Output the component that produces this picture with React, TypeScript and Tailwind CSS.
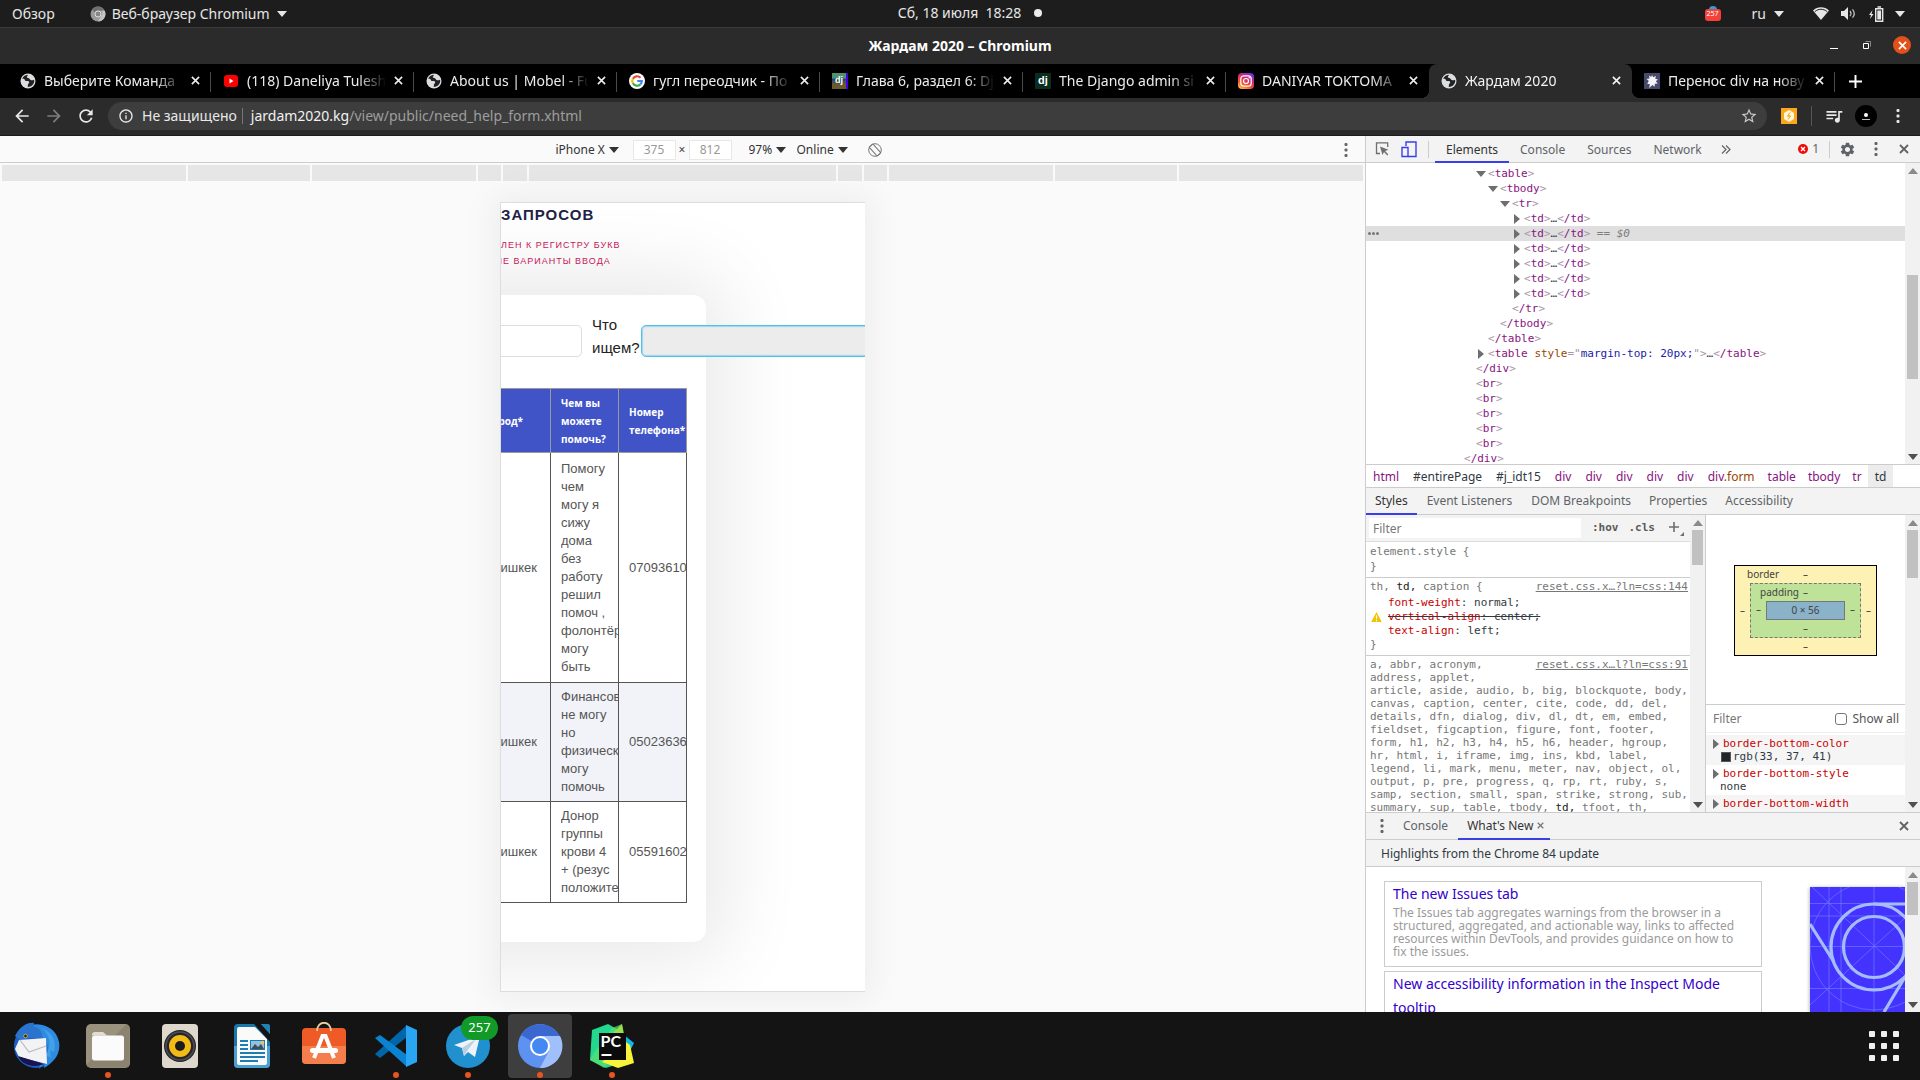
import React from "react";
import type { ReactNode } from "react";
import { MdQueueMusic, MdStarBorder, MdSettings, MdRefresh, MdArrowBack, MdArrowForward, MdInfoOutline } from "react-icons/md";

const MONO = "font-['DejaVu_Sans_Mono',monospace] text-[11px]";

/* ---------- small drawings ---------- */

function Caret({ className = "" }: { className?: string }) {
  return (
    <svg viewBox="0 0 10 6" className={`h-[6px] w-[10px] fill-current ${className}`}>
      <path d="M0 0h10L5 6z" />
    </svg>
  );
}

function Globe() {
  return (
    <svg viewBox="0 0 16 16" className="size-4">
      <circle cx="8" cy="8" r="7.5" fill="#dcdddf" />
      <path d="M7.6 1.8C5 2 3 3.700 2.200 5.900c1.500-.5 2.600.2 2.800 1.300.2.900 1 .9 2.300.9 1.400 0 1.900.6 1.900 1.500s-1 1-1.200 1.900c-.2.800.1 1.700-.4 2.400C11 14 14.200 11.400 14.200 8c0-.5 0-.9-.2-1.300-.9.4-2.200.9-3.400.4-1.100-.5-.6-1.400-1.700-1.800-.9-.3-2-.2-2.100-1.200C6.700 3 8.300 3 7.600 1.800z" fill="#202124" />
    </svg>
  );
}

function YouTube() {
  return (
    <svg viewBox="0 0 16 16" className="size-4">
      <rect x="1" y="2" width="14" height="12" rx="3" fill="#f00" />
      <path d="M6.500 5.500v5L10.500 8z" fill="#fff" />
    </svg>
  );
}

function Google() {
  return (
    <svg viewBox="0 0 16 16" className="size-4">
      <circle cx="8" cy="8" r="8" fill="#fff" />
      <g fill="none" strokeWidth="2.200">
        <path d="M11.500 4.700A4.800 4.800 0 0 0 3.900 5.700" stroke="#ea4335" />
        <path d="M3.900 5.600a4.800 4.800 0 0 0 0 4.800" stroke="#fbbc05" />
        <path d="M3.900 10.300a4.800 4.800 0 0 0 7.400 1.200" stroke="#34a853" />
        <path d="M11.300 11.500A4.800 4.800 0 0 0 12.800 8H8.200" stroke="#4285f4" />
      </g>
    </svg>
  );
}

function Instagram() {
  return (
    <svg viewBox="0 0 16 16" className="size-4">
      <defs>
        <linearGradient id="ig" x1="0.100" y1="1" x2="0.700" y2="0">
          <stop offset="0" stopColor="#ffd23f" />
          <stop offset=".35" stopColor="#f9532d" />
          <stop offset=".65" stopColor="#d62976" />
          <stop offset="1" stopColor="#7b2fd0" />
        </linearGradient>
      </defs>
      <rect width="16" height="16" rx="4" fill="url(#ig)" />
      <rect x="2.800" y="2.800" width="10.400" height="10.400" rx="3" fill="none" stroke="#fff" strokeWidth="1.200" />
      <circle cx="8" cy="8" r="2.500" fill="none" stroke="#fff" strokeWidth="1.200" />
      <circle cx="11.200" cy="4.800" r=".8" fill="#fff" />
    </svg>
  );
}

function DjangoBook() {
  return (
    <span className="flex size-4 items-center justify-center border-r-2 border-[#4400e8] bg-linear-to-b from-[#52916f] from-30% via-[#1e466b] via-40% to-[#6b5a2c] to-75% font-['Liberation_Sans',sans-serif] text-[9px] font-bold text-white">dj</span>
  );
}

function Django() {
  return (
    <span className="flex size-4 items-center justify-center bg-[#092e20] font-['Liberation_Sans',sans-serif] text-[11px] leading-none font-bold text-white">dj</span>
  );
}

function Burst() {
  return (
    <svg viewBox="0 0 16 16" className="size-4">
      <rect width="16" height="16" fill="#474a6b" />
      <path d="M8 2l1.200 2.200L12 3l-.8 2.800 2.800.7-2.200 1.800 2 2.200-3 .2-.1 3L8.500 12l-3.500 3 1-3.800-2.800-.5L4.800 8 2.500 6l3-.6L5 2.600l2.200 1.500z" fill="#f4f4f8" />
    </svg>
  );
}

function Dots({ className = "" }: { className?: string }) {
  return (
    <svg viewBox="0 0 4 14" className={`h-[14px] w-1 fill-current ${className}`}>
      <rect x=".5" y="0" width="3" height="3" rx="1" />
      <rect x=".5" y="5.500" width="3" height="3" rx="1" />
      <rect x=".5" y="11" width="3" height="3" rx="1" />
    </svg>
  );
}

function Cross({ className = "size-[9px]" }: { className?: string }) {
  return (
    <svg viewBox="0 0 10 10" className={`fill-none stroke-current ${className}`}>
      <path d="M1 1l8 8M9 1L1 9" strokeWidth="1.800" />
    </svg>
  );
}

/* ---------- desktop top bar ---------- */

function TopBar() {
  return (
    <header className="grid h-7 shrink-0 grid-cols-3 items-center border-b border-[#3c3c3c] bg-[#1d1d1d] text-[14px] text-[#e6e6e6]">
      <div className="flex items-center pl-3">
        <button>Обзор</button>
        <button className="ml-[35px] flex items-center">
          <svg viewBox="0 0 16 16" className="mr-[6px] size-4">
            <circle cx="8" cy="8" r="7.500" fill="#999" />
            <path d="M8 .5A7.500 7.500 0 0 1 14.500 4.500H8a3.500 3.500 0 0 0-3.200 2L2 3.500A7.500 7.500 0 0 1 8 .5z" fill="#6f6f6f" />
            <path d="M14.700 4.700a7.500 7.500 0 0 1-6.500 10.800l3-5.800a3.500 3.500 0 0 0 0-5z" fill="#c4c4c4" />
            <circle cx="8" cy="8" r="3" fill="#888" stroke="#ddd" />
          </svg>
          Веб-браузер Chromium
          <Caret className="ml-[7px]" />
        </button>
      </div>
      <button className="flex items-center justify-center gap-[13px] pb-[2px] pl-5">
        <span className="whitespace-pre">Сб, 18 июля  18:28</span>
        <span className="size-2 rounded-full bg-[#ececec]" />
      </button>
      <div className="flex items-center justify-end pr-[15px]">
        <span className="relative flex h-[14px] w-4 items-end">
          <span className="absolute -top-[1px] left-1 h-3 w-2 rounded-full bg-[#2ba0da]" />
          <span className="relative flex h-3 w-4 items-center justify-center rounded-[3px] bg-[#f4423a] text-[7px] text-white">257</span>
        </span>
        <button className="ml-[31px] flex items-center gap-2">ru <Caret className="w-[9px]" /></button>
        <button className="ml-[29px] flex items-center" aria-label="Системное меню">
          <svg viewBox="0 0 16 13" className="h-[13px] w-4 fill-current"><path d="M0 3.500C4.500-.8 11.500-.8 16 3.500L8 13z" /><path d="M1.800 4.600C5.500 1.500 10.500 1.500 14.200 4.600" fill="none" stroke="#1d1d1d" /></svg>
          <svg viewBox="0 0 16 13" className="ml-3 h-[13px] w-4"><path d="M0 4h3l4-4v13L3 9H0z" fill="currentColor" /><path d="M9 4q2 2.500 0 5M11.500 2.300q3.500 4.200 0 8.400" fill="none" stroke="#bbb" strokeWidth="1.300" /></svg>
          <svg viewBox="0 0 15 16" className="ml-3 h-4 w-[15px]"><path d="M3.500 4L0 9h2l-1 4 3.500-5h-2z" fill="currentColor" /><path d="M6.700 2.700h7v12.600h-7zM8.500 1h3.500" fill="none" stroke="currentColor" strokeWidth="1.400" /><rect x="8.300" y="4.500" width="3.800" height="9" fill="currentColor" /></svg>
          <Caret className="ml-[11px]" />
        </button>
      </div>
    </header>
  );
}

/* ---------- browser window ---------- */

function TitleBar() {
  return (
    <div className="grid h-9 shrink-0 grid-cols-[1fr_auto_1fr] items-center bg-[#2b2b2b] pb-[2px]">
      <span />
      <h1 className="text-[14px] font-bold text-white">Жардам 2020 – Chromium</h1>
      <div className="flex items-center justify-end pr-[9px]">
        <button aria-label="Свернуть" className="mt-[6px] h-px w-2 bg-white" />
        <button aria-label="Развернуть" className="ml-[25px]">
          <svg viewBox="0 0 8 8" className="size-2 fill-none stroke-white"><path d="M.5 2.500h5v5h-5z" /><path d="M2.500.5h5v5" stroke="#888" /></svg>
        </button>
        <button aria-label="Закрыть" className="ml-[22px] flex size-[18px] items-center justify-center rounded-full bg-[#e2511c] text-white">
          <Cross />
        </button>
      </div>
    </div>
  );
}

const TABS: { title: string; icon: ReactNode; active?: boolean }[] = [
  { title: "Выберите Команда", icon: <Globe /> },
  { title: "(118) Daneliya Tulesh", icon: <YouTube /> },
  { title: "About us | Mobel - Fu", icon: <Globe /> },
  { title: "гугл переодчик - По", icon: <Google /> },
  { title: "Глава 6, раздел 6: Dj", icon: <DjangoBook /> },
  { title: "The Django admin si", icon: <Django /> },
  { title: "DANIYAR TOKTOMA", icon: <Instagram /> },
  { title: "Жардам 2020", icon: <Globe />, active: true },
  { title: "Перенос div на нову", icon: <Burst /> },
];

function TabStrip() {
  return (
    <div className="flex h-[34px] shrink-0 bg-black pl-2 text-[14px] text-[#ececec]">
      {TABS.map((t, i) => (
        <div
          key={t.title}
          className={
            t.active
              ? "relative flex w-[203px] items-center rounded-t-lg bg-[#2b2b2b] pr-[11px] pb-px pl-3 text-[#f4f4f4]"
              : "relative flex w-[203px] items-center pr-[11px] pb-px pl-3"
          }
        >
          <span className="shrink-0">{t.icon}</span>
          <button className="ml-2 min-w-0 flex-1 overflow-hidden pb-px text-left whitespace-nowrap [mask-image:linear-gradient(to_right,#000_80%,transparent)]">{t.title}</button>
          <button aria-label="Закрыть вкладку" className="ml-2"><Cross /></button>
          {t.active ? (
            <>
              <span className="absolute bottom-0 -left-2 size-2 bg-[radial-gradient(circle_at_0_0,#000_8px,#2b2b2b_8px)]" />
              <span className="absolute -right-2 bottom-0 size-2 bg-[radial-gradient(circle_at_100%_0,#000_8px,#2b2b2b_8px)]" />
            </>
          ) : (
            i !== 6 && <span className="absolute top-2 right-0 h-5 w-px bg-[#4a4a4a]" />
          )}
        </div>
      ))}
      <button aria-label="Новая вкладка" className="ml-[14px] self-center">
        <svg viewBox="0 0 12 12" className="size-[13px] stroke-white"><path d="M6 0v12M0 6h12" strokeWidth="1.800" /></svg>
      </button>
    </div>
  );
}

function Toolbar() {
  return (
    <div className="flex h-[38px] shrink-0 items-center border-b border-[#1c1c1c] bg-[#2b2b2b] pb-px text-[14px] text-[#e8e8e8]">
      <button aria-label="Назад" className="ml-3"><MdArrowBack className="size-5" /></button>
      <button aria-label="Вперёд" className="ml-3 text-[#7d7d7d]"><MdArrowForward className="size-5" /></button>
      <button aria-label="Обновить" className="ml-3"><MdRefresh className="size-5" /></button>
      <div className="ml-3 flex h-7 flex-1 items-center rounded-full bg-[#3d3d3d] pr-[9px] pl-[10px]">
        <MdInfoOutline className="size-4" />
        <span className="ml-2 pb-px">Не защищено</span>
        <span className="ml-[5px] h-4 w-px bg-[#777]" />
        <button className="ml-2 flex-1 pb-px text-left text-[#9e9e9e]"><span className="text-[#f2f2f2]">jardam2020.kg</span>/view/public/need_help_form.xhtml</button>
        <button aria-label="В закладки"><MdStarBorder className="size-[18px] text-[#c8c8c8]" /></button>
      </div>
      <button aria-label="Расширение" className="ml-[14px]">
        <svg viewBox="0 0 16 16" className="size-4"><rect width="16" height="16" fill="#fba71b" /><path d="M8 2l5 3v6l-5 3-5-3V5z" fill="#fff5d8" /><path d="M9 4.500L6.500 8h3L7 11.500M9 7l-2.500 2" stroke="#f5a623" fill="none" /></svg>
      </button>
      <span className="ml-[14px] h-5 w-px bg-[#555]" />
      <button aria-label="Медиа" className="ml-3"><MdQueueMusic className="size-5" /></button>
      <button aria-label="Профиль" className="ml-[11px] flex size-[22px] flex-col items-center justify-center gap-[2px] rounded-full bg-black">
        <span className="size-1 rounded-full bg-white" /><span className="h-px w-2 bg-[#bbb]" />
      </button>
      <button aria-label="Меню" className="mr-5 ml-[19px]"><Dots /></button>
    </div>
  );
}

/* ---------- device preview ---------- */

const RULER: string[] = ["grow-[184]", "grow-[122]", "grow-[164]", "grow-[23]", "grow-[24]", "grow-[307]", "grow-[24]", "grow-[23]", "grow-[164]", "grow-[122]", "grow-[184]"];

function Pick({ label, value, className = "" }: { label: string; value: string; className?: string }) {
  return (
    <label className={`flex items-center gap-[3px] ${className}`}>
      <select aria-label={label} className="appearance-none bg-transparent text-[#333]"><option>{value}</option></select>
      <Caret className="w-[7px] text-[#333]" />
    </label>
  );
}

const ROWS = [
  { city: "Бишкек", h: "h-[230px]", help: ["Помогу", "чем", "могу я", "сижу", "дома", "без", "работу", "решил", "помоч ,", "фолонтёр", "могу", "быть"], phone: "070936104" },
  { city: "Бишкек", h: "h-[119px] bg-[#f2f3f9]", help: ["Финансов", "не могу", "но", "физически", "могу", "помочь"], phone: "050236368" },
  { city: "Бишкек", h: "h-[101px]", help: ["Донор", "группы", "крови 4", "+ (резус", "положител"], phone: "055916020" },
];

function PhonePage() {
  return (
    <div className="mx-auto mt-[21px] h-[790px] w-[365px] overflow-hidden border-t border-b border-l border-[#ddd] bg-white font-['Liberation_Sans',sans-serif] shadow-[0_0_30px_8px_rgba(0,0,0,0.050)]">
      <h2 className="mt-[2px] text-[15px] leading-5 font-bold tracking-[1px] text-[#212145]">ЗАПРОСОВ</h2>
      <p className="mt-3 text-[9px] leading-4 tracking-[1px] whitespace-nowrap text-[#c8175a]">
        ЛЕН К РЕГИСТРУ БУКВ<br />
        <span className="-ml-[7px]">ЫЕ ВАРИАНТЫ ВВОДА</span>
      </p>
      <div className="-ml-[120px] mt-[26px] h-[647px] w-[325px] rounded-[13px] bg-white pt-[18px] pl-[120px] shadow-[0_0_80px_20px_rgba(0,0,0,0.090)]">
        <div className="flex h-[46px] w-[460px] items-end text-[15px] leading-[23px] text-[#222]">
          <input aria-label="Город" className="mb-[2px] -ml-[30px] h-8 w-[111px] rounded-[5px] border border-[#ddd] bg-white px-2" />
          <label htmlFor="search" className="ml-[10px] w-[49px]">Что ищем?</label>
          <input id="search" className="mb-[2px] h-8 min-w-0 flex-1 rounded-[5px] border border-[#4fc0f0] bg-[#ececec] px-2 shadow-[inset_0_0_1px_1px_#9fd6ee]" />
        </div>
        <table className="-ml-[19px] mt-[29px] w-[205px] table-fixed border-collapse">
          <thead>
            <tr className="h-[64px] bg-[#4054c8] text-left font-['Open_Sans',sans-serif] text-[10px] leading-[18px] text-white">
              <th className="border border-[#999]"><span className="flex justify-end pr-[27px]">Город*</span></th>
              <th className="border border-[#999] pl-[10px]">Чем вы можете помочь?</th>
              <th className="border border-[#999] pl-[10px]">Номер телефона*</th>
            </tr>
          </thead>
          <tbody>
            {ROWS.map((r) => (
              <tr key={r.phone} className={r.h}>
                <td className="border border-[#555]"><div className="flex justify-end pr-[13px] text-[13px] text-[#555]">{r.city}</div></td>
                <td className="border border-[#555] pl-[10px]">
                  <div className="overflow-hidden text-[13px] leading-[18px] whitespace-nowrap text-[#555]">
                    {r.help.map((l) => <div key={l}>{l}</div>)}
                  </div>
                </td>
                <td className="border border-[#555] pl-[10px]"><div className="overflow-hidden text-[13px] text-[#555]">{r.phone}</div></td>
              </tr>
            ))}
          </tbody>
        </table>
      </div>
    </div>
  );
}

function DevicePane() {
  return (
    <section className="flex min-w-0 flex-1 flex-col overflow-hidden bg-[#fafafa]">
      <div className="flex h-[27px] shrink-0 items-center border-b border-[#ccc] pt-px text-[12px]">
        <div className="flex flex-1 items-center justify-center pl-[93px]">
          <Pick label="Устройство" value="iPhone X" />
          <input aria-label="Ширина" defaultValue="375" className="ml-[14px] h-5 w-[43px] border border-[#e8e8e8] bg-white text-center text-[#999]" />
          <span className="w-[13px] text-center text-[#444]">×</span>
          <input aria-label="Высота" defaultValue="812" className="h-5 w-[43px] border border-[#e8e8e8] bg-white text-center text-[#999]" />
          <Pick label="Масштаб" value="97%" className="ml-[17px]" />
          <Pick label="Сеть" value="Online" className="ml-[11px]" />
          <button aria-label="Повернуть" className="ml-5 text-[#777]">
            <svg viewBox="0 0 14 14" className="size-[14px] fill-none stroke-current"><rect x="4.500" y="1" width="5" height="12" rx="1" transform="rotate(-42 7 7)" /><circle cx="7" cy="7" r="6.300" /></svg>
          </button>
        </div>
        <button aria-label="Параметры" className="mr-[17px] text-[#666]"><Dots className="h-[13px]" /></button>
      </div>
      <div className="flex h-[18px] shrink-0 gap-[2px] px-[2px] pt-[2px]">
        {RULER.map((g, i) => <span key={i} className={`basis-0 bg-[#e6e6e6] ${g}`} />)}
      </div>
      <PhonePage />
    </section>
  );
}

/* ---------- developer tools ---------- */

function Scrollbar({ thumb, className = "" }: { thumb: string; className?: string }) {
  return (
    <div className={`flex w-[15px] shrink-0 flex-col bg-[#f1f1f1] ${className}`}>
      <span className="flex h-[15px] items-center justify-center"><Caret className="h-1 w-[7px] rotate-180 text-[#8a8a8a]" /></span>
      <span className={`mx-[2px] bg-[#c1c1c1] ${thumb}`} />
      <span className="mt-auto flex h-[15px] items-center justify-center"><Caret className="h-1 w-[7px] text-[#505050]" /></span>
    </div>
  );
}

const P = ({ children }: { children: ReactNode }) => <span className="text-[#a894a6]">{children}</span>;

function Open({ name }: { name: string }) {
  return <><P>&lt;</P>{name}<P>&gt;</P></>;
}
function Close({ name }: { name: string }) {
  return <><P>&lt;</P>/{name}<P>&gt;</P></>;
}

type Node = { pad: string; arrow?: "down" | "right"; body: ReactNode; selected?: boolean };
const td = (selected = false): Node => ({
  pad: "pl-[146px]",
  arrow: "right",
  selected,
  body: (
    <>
      <Open name="td" /><span className="text-[#303942]">…</span><Close name="td" />
      {selected && <i className="text-[#7d7d7d]"> == $0</i>}
    </>
  ),
});
const br: Node = { pad: "pl-[110px]", body: <Open name="br" /> };

const TREE: Node[] = [
  { pad: "pl-[110px]", arrow: "down", body: <Open name="table" /> },
  { pad: "pl-[122px]", arrow: "down", body: <Open name="tbody" /> },
  { pad: "pl-[134px]", arrow: "down", body: <Open name="tr" /> },
  td(), td(true), td(), td(), td(), td(),
  { pad: "pl-[146px]", body: <Close name="tr" /> },
  { pad: "pl-[134px]", body: <Close name="tbody" /> },
  { pad: "pl-[122px]", body: <Close name="table" /> },
  {
    pad: "pl-[110px]",
    arrow: "right",
    body: (
      <>
        <P>&lt;</P>table <span className="text-[#994500]">style</span><P>="</P><span className="text-[#1a1aa6]">margin-top: 20px;</span><P>"&gt;</P>
        <span className="text-[#303942]">…</span><Close name="table" />
      </>
    ),
  },
  { pad: "pl-[110px]", body: <Close name="div" /> },
  br, br, br, br, br,
  { pad: "pl-[98px]", body: <Close name="div" /> },
];

function ElementsTree() {
  return (
    <div className="flex flex-[301_1_0px] overflow-hidden bg-white">
      <div className={`flex-1 pt-[3px] leading-[15px] whitespace-pre text-[#881280] ${MONO}`}>
        {TREE.map((n, i) => (
          <div key={i} className={`relative flex h-[15px] items-center ${n.pad} ${n.selected ? "bg-[#dfdfdf]" : ""}`}>
            {n.selected && <span className="absolute left-[2px] flex gap-[1px]">{[0, 1, 2].map((k) => <i key={k} className="size-[3px] rounded-full bg-[#777]" />)}</span>}
            {n.arrow && <Caret className={n.arrow === "right" ? "mr-[2px] w-[7px] -rotate-90 text-[#6e6e6e]" : "mr-[2px] w-[7px] text-[#6e6e6e]"} />}
            <span>{n.body}</span>
          </div>
        ))}
      </div>
      <Scrollbar thumb="mt-[97px] h-[104px]" />
    </div>
  );
}

const CRUMBS: [string, string?][] = [["html"], ["", "#entirePage"], ["", "#j_idt15"], ["div"], ["div"], ["div"], ["div"], ["div"], ["div", ".form"], ["table"], ["tbody"], ["tr"], ["td"]];

function StylesPane() {
  return (
    <div className="flex min-w-0 flex-1">
      <div className={`min-w-0 flex-1 overflow-hidden bg-white text-[#777] ${MONO}`}>
        <div className="flex h-[27px] items-center border-b border-[#ddd] bg-[#f3f3f3] pl-[3px]">
          <input aria-label="Filter styles" placeholder="Filter" className="h-5 min-w-0 flex-1 bg-white px-1 font-['Noto_Sans',sans-serif] text-[12px] placeholder:text-[#777]" />
          <button className="ml-[11px] font-bold text-[#5a5a5a]">:hov</button>
          <button className="ml-[10px] font-bold text-[#5a5a5a]">.cls</button>
          <button aria-label="New style rule" className="mr-[5px] ml-[13px] flex items-end text-[#6e6e6e]">
            <svg viewBox="0 0 17 15" className="h-[15px] w-[17px]"><path d="M6 1v10M1 6h10" stroke="currentColor" strokeWidth="1.600" /><path d="M16 11v4h-4z" fill="currentColor" /></svg>
          </button>
        </div>
        <div className="h-9 border-b border-[#ccc] pt-[2px] pl-1 leading-[15px]">
          <div>element.style {"{"}</div>
          <div>{"}"}</div>
        </div>
        <div className="h-[78px] border-b border-[#ccc] pt-[2px] pr-[2px] pl-1 leading-[14px]">
          <div className="mb-[2px] flex justify-between">
            <span>th, <span className="text-[#222]">td,</span> caption {"{"}</span>
            <a href="#reset-144" className="underline">reset.css.x…?ln=css:144</a>
          </div>
          <div className="pl-[18px] text-[#303942]"><span className="text-[#c80000]">font-weight</span>: normal;</div>
          <div className="flex items-center text-[#303942]">
            <svg viewBox="0 0 12 12" className="mr-[6px] ml-[1px] h-3 w-[11px]"><path d="M6 .5L11.800 11.500H.2z" fill="#f2c200" /><path d="M6 4v4M6 9v1.500" stroke="#fff" strokeWidth="1.300" /></svg>
            <span className="line-through"><span className="text-[#c80000]">vertical-align</span>: center;</span>
          </div>
          <div className="pl-[18px] text-[#303942]"><span className="text-[#c80000]">text-align</span>: left;</div>
          <div>{"}"}</div>
        </div>
        <div className="pt-[2px] pr-[2px] pl-1 leading-[13px]">
          <a href="#reset-91" className="float-right underline">reset.css.x…l?ln=css:91</a>
          a, abbr, acronym,<br />address, applet,<br />
          article, aside, audio, b, big, blockquote, body,<br />
          canvas, caption, center, cite, code, dd, del,<br />
          details, dfn, dialog, div, dl, dt, em, embed,<br />
          fieldset, figcaption, figure, font, footer,<br />
          form, h1, h2, h3, h4, h5, h6, header, hgroup,<br />
          hr, html, i, iframe, img, ins, kbd, label,<br />
          legend, li, mark, menu, meter, nav, object, ol,<br />
          output, p, pre, progress, q, rp, rt, ruby, s,<br />
          samp, section, small, span, strike, strong, sub,<br />
          summary, sup, table, tbody, <span className="text-[#222]">td,</span> tfoot, th,<br />
        </div>
      </div>
      <Scrollbar thumb="h-[35px]" />
    </div>
  );
}

function BoxModel() {
  return (
    <div className="mx-auto mt-[49px] w-[143px] border border-black bg-[#fdf1b4] text-[10px] leading-[17px] text-[#444]">
      <div className="grid grid-cols-[1fr_5px_1fr] pl-3"><span>border</span><span className="-ml-[6px]">–</span><span /></div>
      <div className="grid grid-cols-[15px_1fr_15px] items-center text-center">
        <span>–</span>
        <div className="border border-dashed border-[#777] bg-[#bee297]">
          <div className="grid grid-cols-[1fr_5px_1fr]"><span className="pr-1 text-right">padding</span><span>–</span><span /></div>
          <div className="grid grid-cols-[15px_1fr_15px]">
            <span>–</span>
            <div className="border border-[#777] bg-[#8ab2c9]">0 × 56</div>
            <span>–</span>
          </div>
          <div>–</div>
        </div>
        <span>–</span>
      </div>
      <div className="text-center">–</div>
    </div>
  );
}

function PropName({ children }: { children: string }) {
  return <div className="flex items-center"><Caret className="mr-[2px] w-[7px] -rotate-90 text-[#6e6e6e]" /><span className="text-[#c80000]">{children}</span></div>;
}

function ComputedPane() {
  return (
    <div className="flex w-[215px] shrink-0 overflow-hidden border-l border-[#ccc] bg-white">
      <div className="min-w-0 flex-1">
        <div className="h-[190px] border-b border-[#ccc] pt-px"><BoxModel /></div>
        <div className="flex h-[28px] items-center border-b border-[#eee] pr-[6px] pl-[7px] text-[12px] text-[#555]">
          <input aria-label="Filter computed" placeholder="Filter" className="w-20 min-w-0 flex-1 placeholder:text-[#777]" />
          <label className="flex items-center gap-[5px]"><input type="checkbox" className="size-3 appearance-none rounded-[3px] border border-[#777] bg-white" />Show all</label>
        </div>
        <div className={`pt-[2px] leading-[13px] text-[#303942] ${MONO}`}>
          <div className="h-[30px] bg-[#f5f5f5] pt-[2px] pl-[5px]"><PropName>border-bottom-color</PropName><div className="flex items-center gap-[2px] pl-[10px]"><span className="size-[10px] border border-[#555] bg-[#212529]" />rgb(33, 37, 41)</div></div>
          <div className="h-[30px] pt-[2px] pl-[5px]"><PropName>border-bottom-style</PropName><div className="pl-[9px]">none</div></div>
          <div className="h-[30px] bg-[#f5f5f5] pt-[2px] pl-[5px]"><PropName>border-bottom-width</PropName></div>
        </div>
      </div>
      <Scrollbar thumb="h-[48px]" />
    </div>
  );
}

function Blueprint() {
  return (
    <svg viewBox="0 0 95 125" preserveAspectRatio="xMinYMin slice" className="mt-5 w-[95px] shrink-0 self-stretch bg-[#4433ff] shadow-[0_1px_4px_rgba(0,0,0,0.400)]">
      <g stroke="#6f7dff" strokeOpacity=".65" fill="none">
        <path d="M64 0v125M19 0v125M31 0v125M0 59.500h95M0 16.500h95M0 29h95M0 101.500h95M0-2l95 90M0 118L95 31" />
        <circle cx="64" cy="59" r="64" />
      </g>
      <g stroke="#a5bdff" strokeWidth="3.200" fill="none">
        <circle cx="64" cy="60" r="43" />
        <circle cx="64" cy="60" r="30.500" />
        <path d="M64 17h31M0 37l24 38M95 90l-21 35" />
      </g>
    </svg>
  );
}

function DevTools() {
  return (
    <aside className="flex w-[555px] shrink-0 flex-col overflow-hidden border-l border-[#ccc] bg-white text-[12px] text-[#5f6368]">
      <div className="flex h-[27px] shrink-0 items-center border-b border-[#ccc] bg-[#f3f3f3]">
        <button aria-label="Inspect" className="ml-[9px]">
          <svg viewBox="0 0 14 14" className="size-[14px]"><path d="M5 11.500H1.500V.8h11.200V5" fill="none" stroke="#6e6e6e" strokeWidth="1.300" /><path d="M5 4.500l8.500 3.300-3.400 1.300 3.200 3.300-1 1-3.300-3.300L7.500 13z" fill="#6e6e6e" /></svg>
        </button>
        <button aria-label="Device toolbar" className="ml-[12px]">
          <svg viewBox="0 0 16 17" className="h-[17px] w-4 fill-none stroke-[#3a3ee8]" strokeWidth="1.400"><path d="M5 5V1h10v14.500H7" /><path d="M1 6.500h6v9H1z" /></svg>
        </button>
        <span className="ml-[11px] h-[17px] w-px bg-[#ccc]" />
        <nav className="ml-[6px] flex h-full">
          <button className="h-[27px] border-b-2 border-[#3b3fe8] px-[11px] pt-[2px] text-[#333]">Elements</button>
          <button className="px-[11px] pt-px">Console</button>
          <button className="px-[11px] pt-px">Sources</button>
          <button className="px-[11px] pt-px">Network</button>
        </nav>
        <button aria-label="More tabs" className="ml-2"><svg viewBox="0 0 10 9" className="h-[9px] w-[10px] fill-none stroke-current"><path d="M1 .5l4 4-4 4M5 .5l4 4-4 4" strokeWidth="1.200" /></svg></button>
        <button className="ml-auto flex items-center gap-1"><svg viewBox="0 0 10 10" className="size-[10px]"><circle cx="5" cy="5" r="5" fill="#eb0c0c" /><path d="M3 3l4 4M7 3L3 7" stroke="#fff" strokeWidth="1.300" /></svg>1</button>
        <span className="ml-[10px] h-[17px] w-px bg-[#ccc]" />
        <button aria-label="Settings" className="ml-[9px]"><MdSettings className="size-[17px]" /></button>
        <button aria-label="Menu" className="ml-[18px]"><Dots className="h-[13px]" /></button>
        <button aria-label="Close" className="mr-[11px] ml-[21px]"><Cross className="size-[10px]" /></button>
      </div>
      <ElementsTree />
      <div className="flex h-[23px] shrink-0 items-center border-t border-[#ccc] bg-white text-[#881280]">
        {CRUMBS.map(([n, s], i) => (
          <button key={i} className={i === 12 ? "h-full bg-[#ececec] px-[7px] pt-px text-[#303942]" : i > 8 ? "px-[6px] pt-px" : "px-[7px] pt-px"}>{n}{s && <span className={n ? "text-[#994500]" : "text-[#303942]"}>{s}</span>}</button>
        ))}
      </div>
      <nav className="flex h-7 shrink-0 border-y border-[#ccc] bg-[#f3f3f3]">
        <button className="h-[27px] border-b-2 border-[#3b3fe8] px-[9px] pt-px text-[#333]">Styles</button>
        <button className="px-[10px]">Event Listeners</button>
        <button className="px-[9px]">DOM Breakpoints</button>
        <button className="px-[9px]">Properties</button>
        <button className="px-[9px]">Accessibility</button>
      </nav>
      <div className="flex flex-[297_1_0px] overflow-hidden">
        <StylesPane />
        <ComputedPane />
      </div>
      <div className="flex h-7 shrink-0 items-center border-y border-[#ccc] bg-[#f3f3f3]">
        <button aria-label="Drawer menu" className="ml-[14px]"><Dots className="h-[13px]" /></button>
        <button className="ml-[8px] pr-[10px] pl-[11px]">Console</button>
        <button className="flex h-[27px] items-center gap-[4px] border-b-2 border-[#3b3fe8] pt-px pr-[6px] pl-[9px] text-[#333]">What's New <Cross className="size-[7px] text-[#777]" /></button>
        <button aria-label="Close drawer" className="mr-[11px] ml-auto"><Cross className="size-[10px]" /></button>
      </div>
      <div className="flex h-[27px] shrink-0 items-center border-b border-[#ccc] bg-[#f3f3f3] pt-px pl-[15px] text-[#303942]">Highlights from the Chrome 84 update</div>
      <div className="flex flex-[145_1_0px] overflow-hidden">
        <div className="flex min-w-0 flex-1 flex-col gap-1 pt-[14px] pr-12 pl-[18px]">
          <article className="h-[86px] shrink-0 border border-[#ccc] pl-2">
            <h3><a href="#issues" className="text-[14px] leading-6 text-[#3300cc]">The new Issues tab</a></h3>
            <p className="text-[12px] leading-[13px] whitespace-nowrap text-[#9b9b9b]">
              The Issues tab aggregates warnings from the browser in a<br />
              structured, aggregated, and actionable way, links to affected<br />
              resources within DevTools, and provides guidance on how to<br />
              fix the issues.
            </p>
          </article>
          <article className="shrink-0 border border-[#ccc] pr-5 pl-2">
            <h3><a href="#inspect" className="block text-[14px] leading-6 text-[#3300cc]">New accessibility information in the Inspect Mode tooltip</a></h3>
          </article>
        </div>
        <Blueprint />
        <Scrollbar thumb="h-[33px]" />
      </div>
    </aside>
  );
}

/* ---------- dock ---------- */

const APPS: { name: string; running?: boolean; active?: boolean; badge?: string; art: ReactNode }[] = [
  {
    name: "Thunderbird",
    art: (
      <>
        <circle cx="24" cy="24" r="22" fill="#1f5fc4" />
        <path d="M12 8C22-2 44 2 47 20c2 12-5 20-15 26l1-6-6 7 2-7c8-6 9-18 2-24C24 10 16 12 12 8z" fill="#2f8be0" />
        <path d="M30 6c10 4 15 13 12 24l-4-2 1 8-5-3c6-9 4-20-4-27z" fill="#4fb0ef" fillOpacity=".6" />
        <path d="M3 14C8 4 16 0 22 1l-1 3c8 2 10 8 9 12L16 16l-5 4z" fill="#2a74d0" />
        <path d="M7 18l27-2 1 26-28-7-4-8z" fill="#f3f3f5" />
        <path d="M8 18l9 12 17-6" fill="none" stroke="#b8bac4" strokeWidth="1.200" />
        <path d="M6 34l26 8c-10 4-21 2-26-8z" fill="#1b1350" />
        <circle cx="13.500" cy="14" r="1.800" fill="#222" stroke="#e9b54a" strokeWidth=".8" />
      </>
    ),
  },
  {
    name: "Файлы",
    running: true,
    art: (
      <>
        <rect x="2" y="2" width="44" height="44" rx="5" fill="#9a917e" />
        <path d="M3 42L42 2.500h1A3.500 3.500 0 0 1 45.500 6v36a3.500 3.500 0 0 1-3.500 3.500H6A3.500 3.500 0 0 1 3 42z" fill="#8b826f" />
        <path d="M8 13a3 3 0 0 1 3-3h8l4 3.500H8z" fill="#e2ded6" />
        <rect x="8" y="13.500" width="32" height="25" rx="2.500" fill="#fbfbfb" />
      </>
    ),
  },
  {
    name: "Rhythmbox",
    art: (
      <>
        <rect x="6" y="2" width="36" height="44" rx="4" fill="#ddd8cb" />
        <circle cx="24" cy="24" r="16" fill="#26262a" />
        <circle cx="24" cy="24" r="14" fill="none" stroke="#4c4c56" strokeWidth="1.500" />
        <circle cx="24" cy="24" r="11" fill="#f2bb16" />
        <circle cx="24" cy="24" r="5" fill="#1b1b1b" />
      </>
    ),
  },
  {
    name: "LibreOffice Writer",
    art: (
      <>
        <rect x="6" y="2" width="36" height="44" rx="4" fill="#1878ae" />
        <path d="M6 24h36v18a4 4 0 0 1-4 4H10a4 4 0 0 1-4-4z" fill="#48a1d2" />
        <path d="M9 7a2 2 0 0 1 2-2h16l12 12v24a2 2 0 0 1-2 2H11a2 2 0 0 1-2-2z" fill="#fafafa" />
        <path d="M26 2h7l9 10v8z" fill="#141414" />
        <path d="M33 2h7a2 2 0 0 1 2 2v8z" fill="#2281b6" />
        <path d="M12 19h8M12 23h8M12 27h8M12 31h25M12 35h25M12 39h18" stroke="#1e7db5" strokeWidth="2" />
        <rect x="22.500" y="18.500" width="14" height="9" fill="#8bc3e8" stroke="#2376ad" />
        <path d="M23 27l4-5 3 3 3-3 3 5z" fill="#4b4b4b" />
        <circle cx="34.500" cy="20.500" r="1.700" fill="#f5c542" />
      </>
    ),
  },
  {
    name: "Ubuntu Software",
    art: (
      <>
        <rect x="2" y="6" width="44" height="36" rx="4" fill="#ee5b27" />
        <path d="M2 24h44v14a4 4 0 0 1-4 4H6a4 4 0 0 1-4-4z" fill="#f47e4c" />
        <path d="M17 9c0-11 14-11 14 0" fill="none" stroke="#e9cfa3" strokeWidth="1.800" />
        <path d="M14 36L22.500 14h3L34 36" fill="none" stroke="#fff" strokeWidth="4" />
        <rect x="10" y="26" width="28" height="5" rx="2.500" fill="#fff" />
      </>
    ),
  },
  {
    name: "Visual Studio Code",
    running: true,
    art: (
      <>
        <path d="M3 32l5 4 27-21V3z" fill="#0065a9" />
        <path d="M3 16l5-3 27 20v12z" fill="#0b83d0" />
        <path d="M34 3l11 5v32l-11 5z" fill="#2aa5f3" />
      </>
    ),
  },
  {
    name: "Telegram",
    running: true,
    badge: "257",
    art: (
      <>
        <circle cx="24" cy="24" r="22" fill="#2190cf" />
        <path d="M10 23l26-9-5 21-7-5-4 4-2-8z" fill="#edf3f8" />
        <path d="M18 26l14-9-9 12-3 5z" fill="#b9cfdf" />
      </>
    ),
  },
  {
    name: "Chromium",
    running: true,
    active: true,
    art: (
      <>
        <circle cx="24" cy="24" r="22" fill="#5e92f0" />
        <path d="M24 24L5 13a22 22 0 0 1 38.500 1z" fill="#3a68d0" />
        <path d="M24 14h20A22 22 0 0 1 24 46l9-17z" fill="#9fc0fa" />
        <circle cx="24" cy="24" r="9" fill="#4688f1" stroke="#fff" strokeWidth="2" />
      </>
    ),
  },
  {
    name: "PyCharm",
    running: true,
    art: (
      <>
        <path d="M4 8l16-6 14 8-4 32-12 4L2 38z" fill="#22d88f" />
        <path d="M4 34L24 6l10-4 2 22-20 22-14-8z" fill="#5be070" fillOpacity=".7" />
        <path d="M34 2l2 10-14 2z" fill="#97e04c" />
        <path d="M36 13l10 8-6 12-8-4z" fill="#10b7e8" />
        <path d="M14 40l24-20 4 3 4 18-16 5z" fill="#f8f43a" />
        <rect x="11" y="11" width="27" height="27" fill="#0b0b0b" />
        <rect x="13.500" y="32" width="10" height="2" fill="#fff" />
        <text x="12.500" y="25" fill="#fff" fontSize="16" fontWeight="700" fontFamily="Lato, sans-serif">PC</text>
      </>
    ),
  },
];

function Dock() {
  return (
    <footer className="flex h-[68px] shrink-0 items-center gap-2 bg-[#141414] pl-1">
      {APPS.map((a) => (
        <button key={a.name} aria-label={a.name} className={a.active ? "relative flex size-16 items-center justify-center rounded bg-[#3e3e3e]" : "relative flex size-16 items-center justify-center rounded"}>
          <svg viewBox="0 0 48 48" className="size-12">{a.art}</svg>
          {a.running && <span className="absolute bottom-0 left-[29px] size-[6px] rounded-full bg-[#e9541f]" />}
          {a.badge && <span className="absolute top-[2px] right-[2px] flex h-6 w-[37px] items-center justify-center rounded-full bg-[#119a27] text-[13px] text-white">{a.badge}</span>}
        </button>
      ))}
      <button aria-label="Показать приложения" className="mr-[21px] ml-auto grid grid-cols-3 gap-[6px]">
        {Array.from({ length: 9 }, (_, i) => <span key={i} className="size-[6px] rounded-[1px] bg-[#f0f0ee]" />)}
      </button>
    </footer>
  );
}

export default function App() {
  return (
    <div className="flex h-screen flex-col overflow-hidden bg-[#141414] font-['Noto_Sans',sans-serif] leading-normal">
      <TopBar />
      <TitleBar />
      <TabStrip />
      <Toolbar />
      <main className="flex min-h-0 flex-1">
        <DevicePane />
        <DevTools />
      </main>
      <Dock />
    </div>
  );
}
